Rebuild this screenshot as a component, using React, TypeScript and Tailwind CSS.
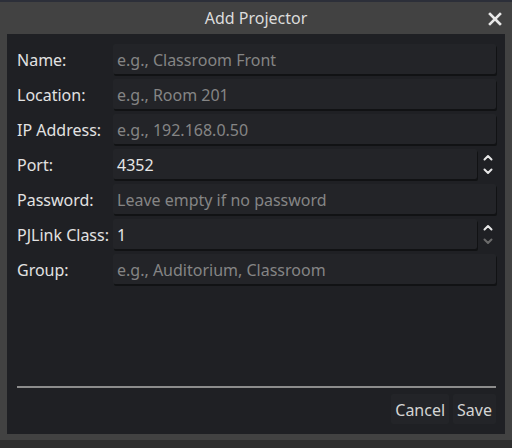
import React from 'react';

const font = { fontFamily: '"Noto Sans", "Open Sans", sans-serif' };

function Chevron({ up, dim }: { up?: boolean; dim?: boolean }) {
  return (
    <svg width="10" height="7" viewBox="0 0 10 7" className={dim ? 'text-[#6b6b6b]' : 'text-[#e6e6e6]'}>
      <path
        d={up ? 'M1.5 5.5 L5 2 L8.5 5.5' : 'M1.5 1.5 L5 5 L8.5 1.5'}
        fill="none"
        stroke="currentColor"
        strokeWidth="2"
        strokeLinecap="round"
        strokeLinejoin="round"
      />
    </svg>
  );
}

interface Row {
  label: string;
  value?: string;
  placeholder?: string;
  spin?: boolean;
  downDim?: boolean;
}

const rows: Row[] = [
  { label: 'Name:', placeholder: 'e.g., Classroom Front' },
  { label: 'Location:', placeholder: 'e.g., Room 201' },
  { label: 'IP Address:', placeholder: 'e.g., 192.168.0.50' },
  { label: 'Port:', value: '4352', spin: true },
  { label: 'Password:', placeholder: 'Leave empty if no password' },
  { label: 'PJLink Class:', value: '1', spin: true, downDim: true },
  { label: 'Group:', placeholder: 'e.g., Auditorium, Classroom' },
];

export default function App() {
  return (
    <div className="w-[512px] h-[448px] flex flex-col bg-[#2b2d34] overflow-hidden" style={font}>
      <div className="h-[2px] bg-[#2c2f39]" />
      <div className="flex-1 flex flex-col bg-[#424242] px-[7px] pb-[6px]">
        <div className="h-[32px] relative flex items-center justify-center">
          <span className="text-[16px] text-[#dcdcdc]">Add Projector</span>
          <svg width="14" height="14" viewBox="0 0 14 14" className="absolute right-[3px] top-[10px]">
            <path d="M2 2 L12 12 M12 2 L2 12" stroke="#e8e8e8" strokeWidth="2.6" strokeLinecap="square" />
          </svg>
        </div>
        <div className="flex-1 flex flex-col bg-[#1f2024] pt-[10px] pb-[10px] pl-[10px] pr-[9px]">
          <div className="flex flex-col gap-[5px]">
            {rows.map((r) => (
              <div key={r.label} className="flex items-center h-[30px]">
                <div className="w-[96px] shrink-0 pt-[2px] text-[16px] text-[#e2e2e2]">{r.label}</div>
                <div className="flex-1 flex items-center h-full">
                  <div className="flex-1 h-full flex items-center px-[4px] pt-[2px] bg-[#232428] rounded-[2px] shadow-[1px_2px_0_#111214] text-[16px]">
                    {r.value ? (
                      <span className="text-[#e6e6e6]">{r.value}</span>
                    ) : (
                      <span className="text-[#858585]">{r.placeholder}</span>
                    )}
                  </div>
                  {r.spin && (
                    <div className="w-[19px] h-full flex flex-col items-center justify-center gap-[7px] pl-[3px]">
                      <Chevron up />
                      <Chevron dim={r.downDim} />
                    </div>
                  )}
                </div>
              </div>
            ))}
          </div>
          <div className="flex-1" />
          <div className="h-[2px] bg-[#8c8c8c] mb-[6px]" />
          <div className="flex justify-end gap-[4px] h-[30px]">
            <div className="px-[4px] pt-[2px] flex items-center bg-[#232428] rounded-[2px] text-[16px] text-[#d4d4d4]">Cancel</div>
            <div className="px-[4px] pt-[2px] flex items-center bg-[#232428] rounded-[2px] text-[16px] text-[#d4d4d4]">Save</div>
          </div>
        </div>
      </div>
      <div className="h-[8px] bg-[#2f2f2f]" />
    </div>
  );
}
